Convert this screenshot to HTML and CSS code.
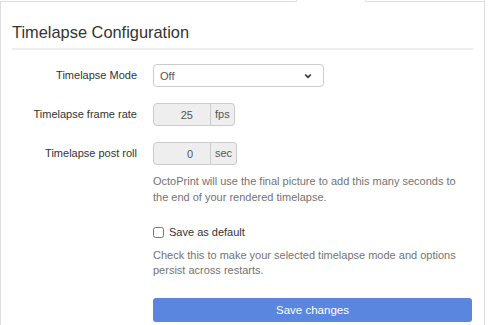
FILE: index.html
```html
<!DOCTYPE html>
<html lang="en">
<head>
    <meta charset="UTF-8">
    <meta name="viewport" content="width=device-width, initial-scale=1.0">
    <title>Timelapse Configuration</title>
    <link rel="stylesheet" href="styles.css">
</head>
<body>
    <div class="tabs">
        <div class="tab-line tab-left"></div>
        <div class="tab-gap"></div>
        <div class="tab-line tab-right"></div>
    </div>
    <div class="panel">
        <h2 class="legend">Timelapse Configuration</h2>

        <div class="form-row">
            <label class="control-label" for="mode">Timelapse Mode</label>
            <div class="controls">
                <div class="select-wrap">
                    <select id="mode" class="select">
                        <option>Off</option>
                        <option>On Z Change</option>
                        <option>Timed</option>
                    </select>
                    <svg class="chevron" width="8" height="6" viewBox="0 0 8 6">
                        <path d="M1.2 1.5 L4 4.3 L6.8 1.5" fill="none" stroke="#333" stroke-width="1.7"/>
                    </svg>
                </div>
            </div>
        </div>

        <div class="form-row">
            <label class="control-label" for="fps">Timelapse frame rate</label>
            <div class="controls">
                <div class="input-group">
                    <input type="text" id="fps" class="input-mini" value="25" disabled>
                    <span class="add-on">fps</span>
                </div>
            </div>
        </div>

        <div class="form-row">
            <label class="control-label" for="postroll">Timelapse post roll</label>
            <div class="controls">
                <div class="input-group">
                    <input type="text" id="postroll" class="input-mini" value="0" disabled>
                    <span class="add-on">sec</span>
                </div>
                <p class="help-block">OctoPrint will use the final picture to add this many seconds to the end of your rendered timelapse.</p>
            </div>
        </div>

        <div class="form-row">
            <div></div>
            <div class="controls">
                <label class="checkbox"><input type="checkbox"> Save as default</label>
                <p class="help-block help-tight">Check this to make your selected timelapse mode and options persist across restarts.</p>
            </div>
        </div>

        <div class="form-row">
            <div></div>
            <div class="controls">
                <button class="btn-save">Save changes</button>
            </div>
        </div>
    </div>
</body>
</html>
```

FILE: styles.css
```css
* {
    margin: 0;
    padding: 0;
    box-sizing: border-box;
}

body {
    font-family: 'Liberation Sans', Arial, sans-serif;
    font-size: 11px;
    color: #333;
    background: white;
    width: 485px;
}

.tabs {
    display: flex;
    height: 2px;
}

.tab-line {
    border-bottom: 1px solid #ddd;
}

.tab-left {
    width: 297px;
    border-right: 1px solid #ddd;
    border-bottom-right-radius: 3px;
}

.tab-gap {
    width: 68px;
}

.tab-right {
    flex: 1;
    border-left: 1px solid #ddd;
    border-right: 1px solid #ddd;
    border-bottom-left-radius: 3px;
}

.panel {
    border-left: 1px solid #ddd;
    border-right: 1px solid #ddd;
    padding: 0 11px 0 11px;
    height: 323px;
}

.legend {
    font-size: 16.4px;
    font-weight: normal;
    color: #333;
    padding-top: 20px;
    padding-bottom: 6px;
    border-bottom: 2px solid #eee;
    margin-bottom: 14px;
    line-height: 20px;
}

.form-row {
    display: grid;
    grid-template-columns: 125px 1fr;
    column-gap: 16px;
    margin-bottom: 16px;
}

.control-label {
    text-align: right;
    line-height: 23px;
    color: #333;
}

.select-wrap {
    position: relative;
    width: 171px;
}

.select {
    appearance: none;
    width: 171px;
    height: 23px;
    border: 1px solid #ccc;
    border-radius: 4px;
    background: white;
    font-family: inherit;
    font-size: 11px;
    color: #555;
    padding-left: 6px;
}

.chevron {
    position: absolute;
    right: 12px;
    top: 9px;
}

.input-group {
    display: flex;
    height: 23px;
}

.input-mini {
    width: 58px;
    height: 23px;
    border: 1px solid #ccc;
    border-radius: 4px 0 0 4px;
    background: #eee;
    font-family: inherit;
    font-size: 11px;
    color: #555;
    text-align: right;
    padding-right: 17px;
}

.add-on {
    border: 1px solid #ccc;
    border-left: none;
    border-radius: 0 4px 4px 0;
    background: #eee;
    color: #555;
    line-height: 21px;
    padding: 0 4px;
}

.help-block {
    color: #737373;
    line-height: 16px;
    margin-top: 8px;
}

.help-tight {
    line-height: 15px;
    margin-top: 5px;
}

.checkbox {
    display: flex;
    align-items: center;
    gap: 5px;
    line-height: 22px;
}

.checkbox input {
    width: 11px;
    height: 11px;
}

.btn-save {
    width: 319px;
    height: 24px;
    border: none;
    border-radius: 3px;
    background: #5b86e0;
    color: white;
    font-family: inherit;
    font-size: 11.5px;
    margin-top: 4px;
}
```
